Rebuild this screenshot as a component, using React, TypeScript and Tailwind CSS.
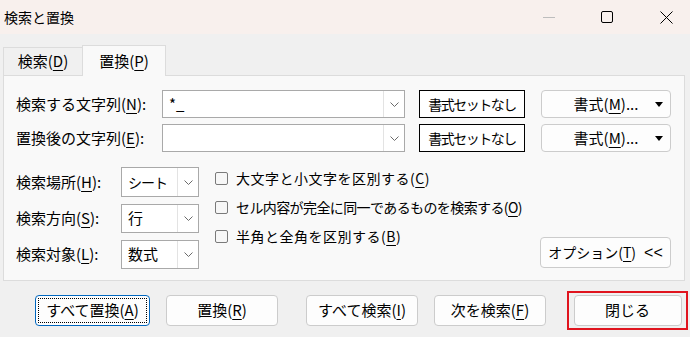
import React from "react";

const U = ({ c }: { c: string }) => (
  <span className="underline underline-offset-[3px] decoration-1">{c}</span>
);

const Chevron = () => (
  <svg width="9" height="5" viewBox="0 0 9 5">
    <path d="M0.5 0.5 L4.5 4.5 L8.5 0.5" stroke="#6a6a6a" fill="none" />
  </svg>
);

const Caret = () => (
  <svg width="8" height="5" viewBox="0 0 8 5" className="absolute right-[7px] top-[11px]">
    <path d="M0 0 H8 L4 5 Z" fill="#000" />
  </svg>
);

const Combo = ({ value, width, height, text = "text-[15px]" }: { value?: string; width: string; height: string; text?: string }) => (
  <div className={`flex ${width} ${height} border border-[#a9a9a9] bg-white`}>
    <div className={`flex-1 flex items-center pl-[6px] ${text}`}>{value}</div>
    <div className="w-[21px] flex items-center justify-center border-l border-[#e3e3e3] bg-white">
      <Chevron />
    </div>
  </div>
);

const Check = ({ children, track }: { children: React.ReactNode; track: string }) => (
  <div className="flex items-center h-[20px] gap-[8px]">
    <div className="w-[13px] h-[13px] rounded-[2px] border border-[#7a7a7a] bg-[#f7f7f7]" />
    <span className={`text-[14px] ${track}`}>{children}</span>
  </div>
);

const Btn = ({ children, width, className = "" }: { children: React.ReactNode; width: string; className?: string }) => (
  <div
    className={`${width} h-[31px] flex items-center justify-center rounded-[4px] border border-[#cccccc] bg-[#fdfdfd] text-[15px] ${className}`}
  >
    {children}
  </div>
);

const FormatRow = ({ label, mn, value }: { label: string; mn: string; value?: string }) => (
  <div className="flex items-center h-[28px]">
    <div className="w-[146px] text-[15px]">
      {label}(<U c={mn} />):
    </div>
    <Combo value={value} width="w-[243px]" height="h-[28px]" />
    <div className="ml-[14px] w-[106px] h-[28px] flex items-center justify-center border border-black bg-white text-[14px] tracking-[-1.5px]">
      書式セットなし
    </div>
    <div className="ml-[16px] w-[130px] h-[28px] relative flex items-center justify-center rounded-[4px] border border-[#cccccc] bg-[#fdfdfd] text-[15px]">
      <span>
        書式(<U c="M" />)...
      </span>
      <Caret />
    </div>
  </div>
);

export default function App() {
  return (
    <div
      className="w-[690px] h-[337px] bg-[#f0f0f0] flex flex-col overflow-hidden text-black"
      style={{ fontFamily: '"Noto Sans CJK JP", "Noto Sans", sans-serif' }}
    >
      {/* title bar */}
      <div className="h-[34px] bg-[#f8f0ed] flex items-center pl-[4px] shrink-0">
        <span className="text-[14px] leading-none">検索と置換</span>
        <div className="flex-1" />
        <div className="flex items-center h-full">
          <div className="w-[58px] flex justify-center">
            <div className="w-[12px] h-px bg-[#bdbdbd]" />
          </div>
          <div className="w-[58px] flex justify-center">
            <div className="w-[12px] h-[12px] border border-black rounded-[2px]" />
          </div>
          <div className="w-[60px] flex justify-center mr-[-6px]">
            <svg width="13" height="13" viewBox="0 0 13 13">
              <path d="M0.5 0.5 L12.5 12.5 M12.5 0.5 L0.5 12.5" stroke="#000" strokeWidth="1" />
            </svg>
          </div>
        </div>
      </div>

      {/* tabs */}
      <div className="flex items-end pt-[11px] pl-[3px] shrink-0 relative z-10">
        <div className="w-[79px] h-[28px] flex items-center justify-center border-t border-l border-[#dcdcdc] bg-[#f0f0f0] text-[15px]">
          検索(<U c="D" />)
        </div>
        <div className="w-[84px] h-[31px] -mb-px flex items-center justify-center border-t border-l border-r border-[#dcdcdc] bg-[#f9f9f9] text-[15px]">
          置換(<U c="P" />)
        </div>
      </div>

      {/* panel */}
      <div className="ml-[3px] w-[682px] h-[206px] border border-[#dcdcdc] bg-[#f9f9f9] pl-[12px] pt-[14px] flex flex-col shrink-0">
        <FormatRow label="検索する文字列" mn="N" value="*_" />
        <div className="mt-[6px]">
          <FormatRow label="置換後の文字列" mn="E" />
        </div>

        <div className="flex mt-[15px] w-[655px]">
          <div className="flex flex-col gap-[7px]">
            <div className="flex items-center">
              <div className="w-[105px] text-[15px]">
                検索場所(<U c="H" />):
              </div>
              <Combo value="シート" width="w-[78px]" height="h-[30px]" text="text-[14px] tracking-[-1px]" />
            </div>
            <div className="flex items-center">
              <div className="w-[105px] text-[15px]">
                検索方向(<U c="S" />):
              </div>
              <Combo value="行" width="w-[78px]" height="h-[29px]" />
            </div>
            <div className="flex items-center">
              <div className="w-[105px] text-[15px]">
                検索対象(<U c="L" />):
              </div>
              <Combo value="数式" width="w-[78px]" height="h-[29px]" />
            </div>
          </div>
          <div className="ml-[16px] flex flex-col gap-[9px] pt-[1px]">
            <Check track="tracking-[0.5px]">
              大文字と小文字を区別する(<U c="C" />)
            </Check>
            <Check track="tracking-[-0.6px]">
              セル内容が完全に同一であるものを検索する(<U c="O" />)
            </Check>
            <Check track="tracking-[0.5px]">
              半角と全角を区別する(<U c="B" />)
            </Check>
          </div>
          <div className="flex-1" />
          <div className="self-end mb-[1px] w-[131px] h-[31px] flex items-center justify-center rounded-[4px] border border-[#cccccc] bg-[#fdfdfd] text-[14px]">
            オプション(<U c="T" />)
            <span className="ml-[8px] text-[16px]" style={{ fontFamily: '"Liberation Sans", sans-serif' }}>
              &lt;&lt;
            </span>
          </div>
        </div>
      </div>

      {/* bottom buttons */}
      <div className="flex items-center pl-[35px] pt-[10px]">
        <div className="w-[115px] h-[31px] rounded-[4px] border-[1.5px] border-[#0067c0] bg-[#fdfdfd] p-[2px]">
          <div className="w-full h-full border border-dotted border-black flex items-center justify-center text-[15px]">
            すべて置換(<U c="A" />)
          </div>
        </div>
        <Btn width="w-[112px]" className="ml-[16px]">
          置換(<U c="R" />)
        </Btn>
        <Btn width="w-[112px]" className="ml-[28px]">
          すべて検索(<U c="I" />)
        </Btn>
        <Btn width="w-[112px]" className="ml-[16px]">
          次を検索(<U c="F" />)
        </Btn>
        <div className="ml-[21px] w-[121px] h-[39px] border-2 border-[#e0141e] flex items-center justify-center">
          <Btn width="w-[108px]">閉じる</Btn>
        </div>
      </div>
    </div>
  );
}
